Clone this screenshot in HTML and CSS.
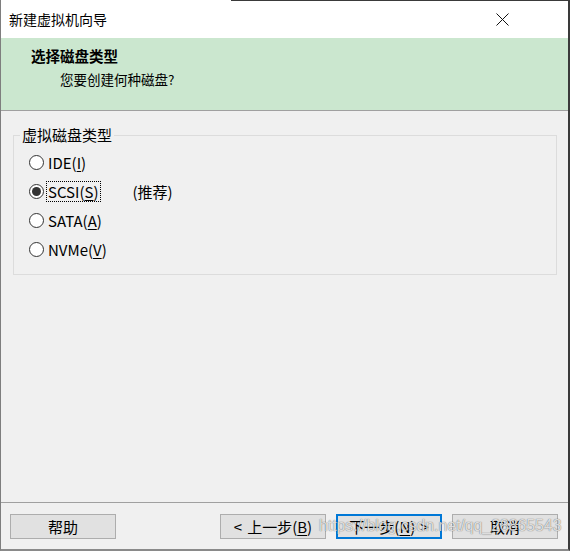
FILE: index.html
```html
<!DOCTYPE html>
<html lang="zh">
<head>
<meta charset="utf-8">
<title>新建虚拟机向导</title>
<link rel="stylesheet" href="styles.css">
</head>
<body>
<div class="window">
  <div class="titlebar">
    <span class="title">新建虚拟机向导</span>
    <svg class="close" width="13" height="13" viewBox="0 0 13 13" aria-hidden="true">
      <path d="M0.5 0.5 L12.5 12.5 M12.5 0.5 L0.5 12.5" stroke="#111" stroke-width="1" fill="none"/>
    </svg>
  </div>
  <div class="header">
    <div class="h-title">选择磁盘类型</div>
    <div class="h-sub">您要创建何种磁盘?</div>
  </div>
  <div class="content">
    <fieldset class="group">
      <legend class="legend">虚拟磁盘类型</legend>
      <div class="row"><span class="radio"></span><span class="label">IDE(<u>I</u>)</span></div>
      <div class="row"><span class="radio checked"></span><span class="label focus">SCSI(<u>S</u>)</span><span class="note">(推荐)</span></div>
      <div class="row"><span class="radio"></span><span class="label">SATA(<u>A</u>)</span></div>
      <div class="row"><span class="radio"></span><span class="label">NVMe(<u>V</u>)</span></div>
    </fieldset>
  </div>
  <div class="footer">
    <button class="btn">帮助</button>
    <div class="spacer"></div>
    <button class="btn"><span class="gl">&lt;</span>上一步(<u>B</u>)</button>
    <button class="btn default">下一步(<u>N</u>)<span class="gr">&gt;</span></button>
    <button class="btn">取消</button>
    <span class="watermark">https://blog.csdn.net/qq_28865543</span>
  </div>
</div>
</body>
</html>
```
FILE: styles.css
```css
* { box-sizing: border-box; }
html, body { margin: 0; padding: 0; }
body {
  width: 570px;
  height: 551px;
  background: #f0f0f0;
  font-family: "Noto Sans CJK SC", "Noto Sans", sans-serif;
  color: #000;
  overflow: hidden;
}
.window {
  width: 570px;
  height: 551px;
  display: flex;
  flex-direction: column;
  background: #f0f0f0;
  border-left: 1px solid #7e7e7e;
  border-right: 2px solid #3a3a3a;
  border-bottom: 2px solid #8a8a8a;
}
.titlebar {
  height: 38px;
  flex: 0 0 38px;
  display: flex;
  align-items: center;
  justify-content: space-between;
  padding-left: 8px;
  background: linear-gradient(to right, #fff 230px, #3a3a3a 230px) top left / 100% 1px no-repeat, #fff;
}
.title { font-size: 14px; line-height: 20px; }
.close { margin-right: 59px; display: block; }
.header {
  flex: 0 0 73px;
  background: #cbe7cf;
  border-bottom: 1px solid #a0a0a0;
  padding: 8px 0 0 30px;
}
.h-title {
  font-size: 14.5px;
  font-weight: 700;
  line-height: 20px;
}
.h-sub {
  font-size: 13.5px;
  line-height: 20px;
  margin-top: 3px;
  padding-left: 29px;
}
.content {
  flex: 1;
  padding: 14px 11px 0 12px;
}
.group {
  margin: 0;
  border: 1px solid #dcdcdc;
  padding: 3px 0 10px 15px;
  min-width: 0;
}
.legend {
  font-size: 15px;
  line-height: 20px;
  padding: 0 2px;
  margin-left: -9px;
}
.row {
  height: 29px;
  display: flex;
  align-items: center;
  font-size: 15px;
}
.radio {
  width: 15px;
  height: 15px;
  border: 1px solid #333;
  border-radius: 50%;
  background: #fff;
  display: flex;
  align-items: center;
  justify-content: center;
  margin-right: 4px;
  flex: 0 0 15px;
}
.radio.checked::after {
  content: "";
  width: 9px;
  height: 9px;
  border-radius: 50%;
  background: #333;
}
.label { line-height: 19px; padding: 0 1px; border: 1px dotted transparent; margin-left: -2px; }
.label.focus { border-color: #000; }
.note { margin-left: 32px; }
u { text-decoration-thickness: 1px; text-underline-offset: 2px; }
.footer {
  position: relative;
  flex: 0 0 47px;
  border-top: 1px solid #a0a0a0;
  padding: 11px 10px 10px 9px;
  display: flex;
  gap: 10px;
}
.spacer { flex: 1; }
.btn {
  width: 106px;
  height: 25px;
  background: #e1e1e1;
  border: 1px solid #adadad;
  font-family: "Noto Sans CJK SC", "Noto Sans", sans-serif;
  font-size: 15px;
  line-height: 20px;
  padding: 0;
  color: #000;
  white-space: nowrap;
}
.gl { margin-right: 5px; }
.gr { margin-left: 5px; }
.btn.default { border: 2px solid #0078d7; }
.watermark {
  position: absolute;
  left: 318px;
  top: 14px;
  font-family: "Liberation Sans", Arial, sans-serif;
  font-size: 15.8px;
  color: rgba(255, 255, 255, 0.8);
  text-shadow: 0 0 1px rgba(0, 0, 0, 0.5), 0 0 1px rgba(0, 0, 0, 0.25);
  white-space: nowrap;
  pointer-events: none;
}
```
